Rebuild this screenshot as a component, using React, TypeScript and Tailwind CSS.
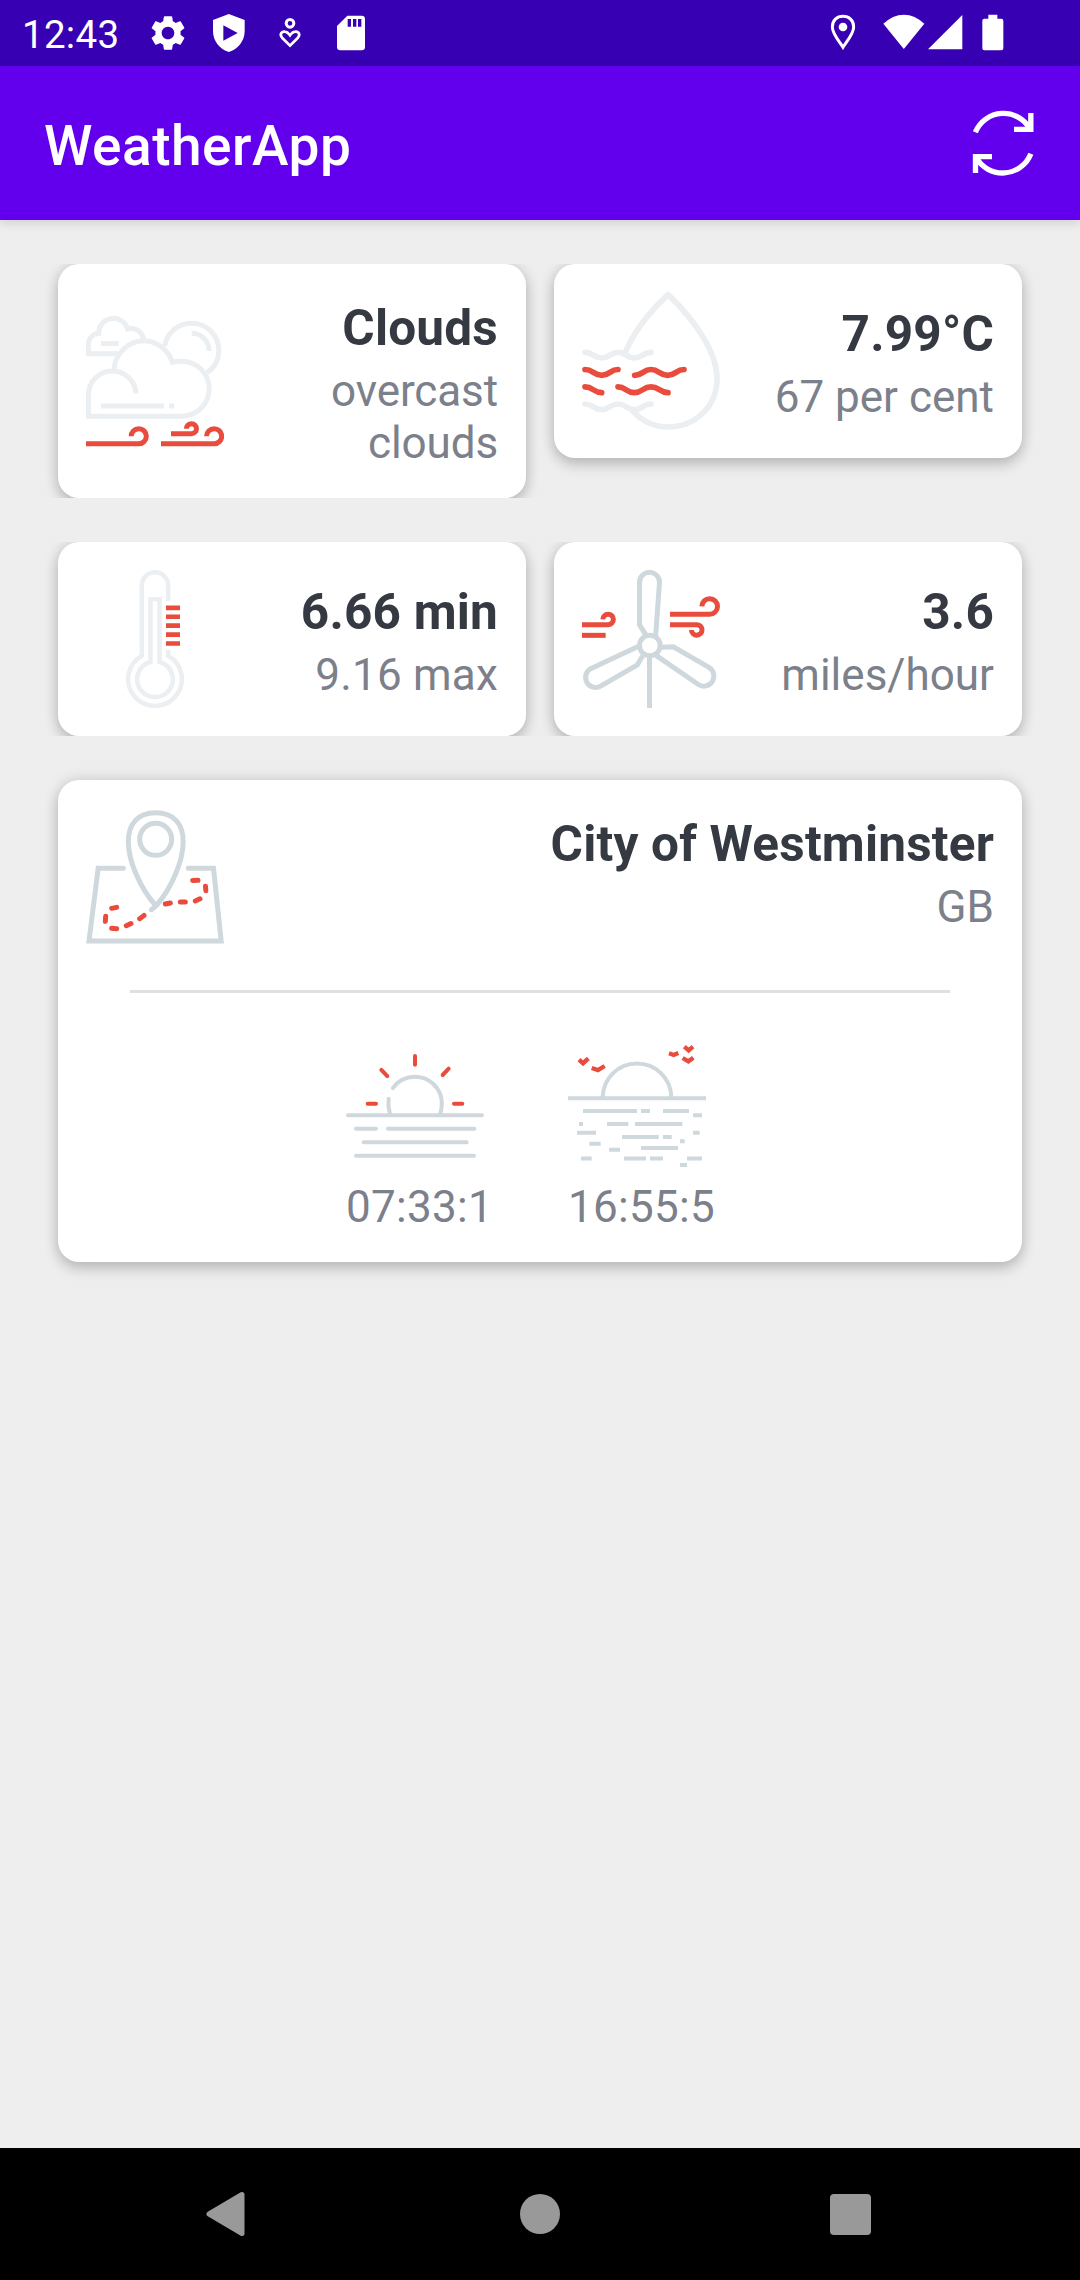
import type { ReactNode } from "react";
import { MdSettings } from "react-icons/md";

const LIGHT = "#ebeff2";
const STEEL = "#cfd8dc";
const RED = "#e94c3d";

const CARD =
  "rounded-[21px] bg-white shadow-[0_7px_14px_rgba(0,0,0,0.17),0_0_15px_rgba(0,0,0,0.13)]";

function WeatherIcon({ viewBox, children }: { viewBox: string; children: ReactNode }) {
  return (
    <svg viewBox={viewBox} fill="none" className="block h-[138px] w-[138px] shrink-0">
      {children}
    </svg>
  );
}

function StatusIcon({ viewBox, children }: { viewBox: string; children: ReactNode }) {
  return (
    <svg viewBox={viewBox} fill="none" className="block h-[42px] w-[42px] shrink-0">
      {children}
    </svg>
  );
}

function CloudsIcon() {
  return (
    <WeatherIcon viewBox="138 186 414 414">
      <g stroke={LIGHT} strokeWidth="15">
        <path d="M235 311H145.5V282A32 32 0 0 1 176 250A45 45 0 0 1 220 204.500A45.500 45.500 0 0 1 263 237Q269 235 276 235.500A38 38 0 0 1 311 268" />
        <path d="M183 280.500H236" />
        <path d="M374 288A81.500 81.500 0 0 1 455 219.500A81.500 81.500 0 0 1 536.500 301A81.500 81.500 0 0 1 502 368" />
        <path d="M455 250A52 52 0 0 1 507 303" />
        <path d="M222 360A91.500 91.500 0 0 1 314 272.500A91.500 91.500 0 0 1 397 337Q410 333.500 425 333.500A82.500 82.500 0 0 1 507.500 416A82.500 82.500 0 0 1 430 498.500H145.500V434A71 71 0 0 1 216 363A71 71 0 0 1 288 430" />
        <path d="M183 468H372M387 468H402" />
      </g>
      <g stroke={RED} strokeWidth="15">
        <path d="M138 581.500H296A22.750 22.750 0 1 0 273.500 559" />
        <path d="M363 581.500H522A22.750 22.750 0 1 0 499.500 559" />
        <path d="M393 551H454A15 15 0 1 0 439.500 536" />
      </g>
    </WeatherIcon>
  );
}

function HumidityIcon() {
  return (
    <WeatherIcon viewBox="126 126 414 414">
      <g stroke={LIGHT} strokeWidth="17" strokeLinecap="round" strokeLinejoin="round">
        <path d="M257 305C282 246 328 186 384.500 134C470 216 531 310 531 386C531 470 465 531 384.500 531C343 531 305 513 277 482" />
        <path d="M135 307C160 307 160 324 185 324S210 307 234 307S258 324 283 324S308 307 333 307" />
        <path d="M135 462C160 462 160 479 185 479S210 462 234 462S258 479 283 479S308 462 333 462" />
      </g>
      <g stroke={RED} strokeWidth="17" strokeLinecap="round">
        <path d="M135 358.500C160 358.500 160 376 185 376S210 358.500 234 358.500" />
        <path d="M284 376C309 376 309 358.500 333 358.500S358 376 383 376S408 358.500 432 358.500" />
        <path d="M135 410.500C160 410.500 160 428 185 428" />
        <path d="M234 410.500C258 410.500 258 428 283 428S308 410.500 333 410.500S358 428 384 428" />
      </g>
    </WeatherIcon>
  );
}

function ThermometerIcon() {
  return (
    <WeatherIcon viewBox="138 120 414 414">
      <g stroke={LIGHT} strokeWidth="13.500">
        <path d="M384.500 213V166.500A39.500 39.500 0 0 0 305.500 166.500V377A80.500 80.500 0 1 0 384.500 377V360" />
        <path d="M331.500 396V207.500H358.500V396A53.500 53.500 0 1 1 331.500 396Z" />
      </g>
      <path
        d="M378 233.500H420M378 260.300H420M378 287H420M378 313.700H420M378 340.500H420"
        stroke={RED}
        strokeWidth="14"
      />
    </WeatherIcon>
  );
}

function TurbineIcon() {
  return (
    <WeatherIcon viewBox="126 120 414 414">
      <g stroke={STEEL} strokeWidth="15">
        <circle cx="329.500" cy="346.500" r="31" />
        <path d="M328.500 378V534" />
        <path d="M317 314L298.500 284V157A30 30 0 0 1 358.500 157L347 316" />
        <path d="M299 347L152 416A29.500 29.500 0 0 0 182 468.500L292 405L308 377" />
        <path d="M364 351.500L400 350.500L508 413A29.500 29.500 0 0 1 475 463.500L348 376" />
      </g>
      <g stroke={RED} strokeWidth="15">
        <path d="M390 253H509A23.500 23.500 0 1 0 485.500 229" />
        <path d="M390 284H470A15.750 15.750 0 1 1 454.500 300" />
        <path d="M126 284H205A15.750 15.750 0 1 0 188.500 268" />
        <path d="M126 316H197" />
      </g>
    </WeatherIcon>
  );
}

function MapIcon() {
  return (
    <WeatherIcon viewBox="138 144 414 414">
      <g stroke={STEEL} strokeWidth="15" strokeLinecap="round">
        <path d="M250 324.500H174.500L147 543H543.500L520.500 324.500H445" />
        <path d="M348 438C300 385 265 302 265 245C265 192 293 158.500 347 158.500C402 158.500 429.500 192 429.500 245C429.500 302 395 385 348 438L334 449" />
        <circle cx="347" cy="238" r="48" />
      </g>
      <path
        d="M215 445L230 442M197 469L196 484M215 504.500L230 506M259 497L273 490.500M299 476L312 466.500M376 432L391 429M421 426H436M466 423L480 416.500M497.500 392L496.500 378.500M474 361L458 361.500"
        stroke={RED}
        strokeWidth="15"
        strokeLinecap="round"
      />
    </WeatherIcon>
  );
}

function SunriseIcon() {
  return (
    <WeatherIcon viewBox="78 51 414 414">
      <g stroke={STEEL} strokeWidth="12" strokeLinecap="round">
        <path d="M84 285.500H486M108 326.500H168M204 326.500H463M131 367H440M108 407.500H462" />
        <path d="M218.500 204.500A80.500 80.500 0 0 1 285 170A80.500 80.500 0 0 1 365.500 250Q365.500 267 361 281M210 281Q203 259 206 236" />
      </g>
      <path
        d="M285 108V134M184 149.500L202 168.500M386 146L368 165M143 251H168M402 251H427"
        stroke={RED}
        strokeWidth="12"
        strokeLinecap="round"
      />
    </WeatherIcon>
  );
}

function SunsetIcon() {
  return (
    <WeatherIcon viewBox="744 51 414 414">
      <g stroke={STEEL} strokeWidth="12">
        <path d="M744 234.500H1158" />
        <path d="M848 231C850 174 895 130.500 951 130.500S1052 174 1054 231" />
        <path d="M789 273H951M963 273H990M1029 273H1107M1119 286H1146" />
        <path d="M777 312H789M861 312H925M945 312H1087M771 338H828M1119 338H1139" />
        <path d="M906 351H1016M1029 351H1055M1080 364H1094M808 371H842" />
        <path d="M963 384H1074M867 389.500H900M783 415.500H815M912 415.500H978" />
        <path d="M990 415.500H1029M1101 415.500H1146M1080 435H1101" />
      </g>
      <path
        d="M777 119L789 130L805 115M815 144L834 150.500L854 138M1047 100L1061 105L1075 99M1093 80L1106 91L1119 80M1088 114L1105 124L1120 113"
        stroke={RED}
        strokeWidth="13"
      />
    </WeatherIcon>
  );
}

function StatusBar() {
  return (
    <div className="flex h-[66px] items-center bg-[#3700b3] pr-[66px] pl-[22px] text-white">
      <span className="w-[125px] pt-[3px] text-[38.5px] leading-[46px] tracking-[0.3px]">12:43</span>
      <div className="flex gap-[19px]">
        <MdSettings className="h-[42px] w-[42px]" />
        <StatusIcon viewBox="626 37 126 126">
          <path
            fillRule="evenodd"
            fill="#fff"
            d="M688.500 43L736 61V95C736 124 716 149 688.500 157C661 149 641 124 641 95V61ZM672 77V123L715 100Z"
          />
        </StatusIcon>
        <StatusIcon viewBox="808 37 126 126">
          <g stroke="#fff">
            <circle cx="871" cy="71" r="11.500" strokeWidth="9" />
            <path
              d="M871 138L848 115C837 103 848 94 856 96C864 97 867 102 871 107C875 102 878 97 886 96C894 94 905 103 894 115Z"
              strokeWidth="8"
            />
          </g>
        </StatusIcon>
        <StatusIcon viewBox="991 37 126 126">
          <path
            fillRule="evenodd"
            fill="#fff"
            d="M1043 48H1086Q1096 48 1096 58V142Q1096 152 1086 152H1022Q1012 152 1012 142V79ZM1044 58V81H1054V58ZM1060 58V81H1070V58ZM1075 58V81H1085V58Z"
          />
        </StatusIcon>
      </div>
      <div className="ml-auto flex items-center">
        <StatusIcon viewBox="126 37 126 126">
          <path
            d="M189 143C180 128 157 103 157 82C157 62 171 50 189 50S221 62 221 82C221 103 198 128 189 143Z"
            stroke="#fff"
            strokeWidth="9"
          />
          <circle cx="189" cy="82" r="13" fill="#fff" />
        </StatusIcon>
        <div className="ml-[19px] flex">
          <StatusIcon viewBox="308 37 126 126">
            <path d="M309 72.500Q337 45 370.500 45T432 72.500L370.500 148Z" fill="#fff" />
          </StatusIcon>
          <StatusIcon viewBox="434 37 126 126">
            <path d="M546 46V149H443Z" fill="#fff" />
          </StatusIcon>
        </div>
        <div className="ml-[5px]">
          <StatusIcon viewBox="575 37 126 126">
            <path
              d="M624 45H651V57H663Q669 57 669 63V146Q669 152 663 152H612Q606 152 606 146V63Q606 57 612 57H624Z"
              fill="#fff"
            />
          </StatusIcon>
        </div>
      </div>
    </div>
  );
}

function AppBar() {
  return (
    <header className="relative flex h-[154px] items-center justify-between bg-[#6200ee] pr-[42px] pl-[44px] shadow-[0_3px_10px_rgba(0,0,0,0.13)]">
      <h1 className="pt-[6px] text-[55px] leading-[64px] font-medium tracking-[0.5px] text-white">
        WeatherApp
      </h1>
      <button aria-label="Refresh">
        <svg
          viewBox="570 312 204 234"
          fill="none"
          stroke="#fff"
          strokeWidth="16"
          className="block h-[78px] w-[68px]"
        >
          <path d="M586 397A91 91 0 0 1 750 387M752.500 339V388H702" />
          <path d="M752.500 461A91 91 0 0 1 588 472M586.500 519V470H636" />
        </svg>
      </button>
    </header>
  );
}

function Reading({ title, detail, className }: { title: string; detail: string; className: string }) {
  return (
    <div className={`flex-1 text-right ${className}`}>
      <div className="text-[49.5px] leading-[58px] font-bold tracking-[0.2px] whitespace-nowrap text-[#353942]">
        {title}
      </div>
      <div className="mt-[8px] text-[44px] leading-[52px] text-[#7b808a]">{detail}</div>
    </div>
  );
}

function Tile({
  icon,
  title,
  detail,
  className,
}: {
  icon: ReactNode;
  title: string;
  detail: string;
  className: string;
}) {
  return (
    <div className="overflow-hidden px-[14px]">
      <section className={`flex items-center px-[28px] ${CARD} ${className}`}>
        {icon}
        <Reading title={title} detail={detail} className="pt-[6px] pl-[42px]" />
      </section>
    </div>
  );
}

export default function App() {
  return (
    <div className="flex h-[2280px] w-[1080px] flex-col overflow-hidden bg-[#eeeeee] font-[Roboto,sans-serif]">
      <StatusBar />
      <AppBar />
      <main className="flex flex-1 flex-col gap-[44px] px-[44px] pt-[44px]">
        <div className="grid grid-cols-2">
          <Tile
            icon={<CloudsIcon />}
            title="Clouds"
            detail="overcast clouds"
            className="h-[234px] tracking-[-0.1px]"
          />
          <Tile icon={<HumidityIcon />} title="7.99°C" detail="67 per cent" className="h-[194px]" />
        </div>
        <div className="grid grid-cols-2">
          <Tile
            icon={<ThermometerIcon />}
            title="6.66 min"
            detail="9.16 max"
            className="h-[194px] tracking-[0.2px]"
          />
          <Tile icon={<TurbineIcon />} title="3.6" detail="miles/hour" className="h-[194px]" />
        </div>
        <div className="overflow-x-clip px-[14px]">
          <section className={`h-[482px] pt-[28px] ${CARD}`}>
            <div className="flex px-[28px]">
              <MapIcon />
              <Reading title="City of Westminster" detail="GB" className="pt-[7px]" />
            </div>
            <hr className="mx-[72px] mt-[44px] border-t-[3px] border-[#e0e0e0]" />
            <div className="mt-[44px] flex pl-[288px] text-[44px] leading-[52px] tracking-[0.3px] text-[#7b808a]">
              <div className="w-[222px]">
                <SunriseIcon />
                <div className="mt-[6px]">07:33:1</div>
              </div>
              <div>
                <SunsetIcon />
                <div className="mt-[6px]">16:55:5</div>
              </div>
            </div>
          </section>
        </div>
      </main>
      <nav className="flex h-[132px] items-center bg-black pl-[205px]">
        <svg viewBox="0 0 42 46" className="h-[46px] w-[42px]">
          <path
            d="M4 23L37 3.500V42.500Z"
            fill="#999"
            stroke="#999"
            strokeWidth="5"
            strokeLinejoin="round"
          />
        </svg>
        <div className="ml-[273px] h-[40px] w-[40px] rounded-full bg-[#999999]" />
        <div className="ml-[270px] h-[41px] w-[41px] rounded-[4px] bg-[#999999]" />
      </nav>
    </div>
  );
}
